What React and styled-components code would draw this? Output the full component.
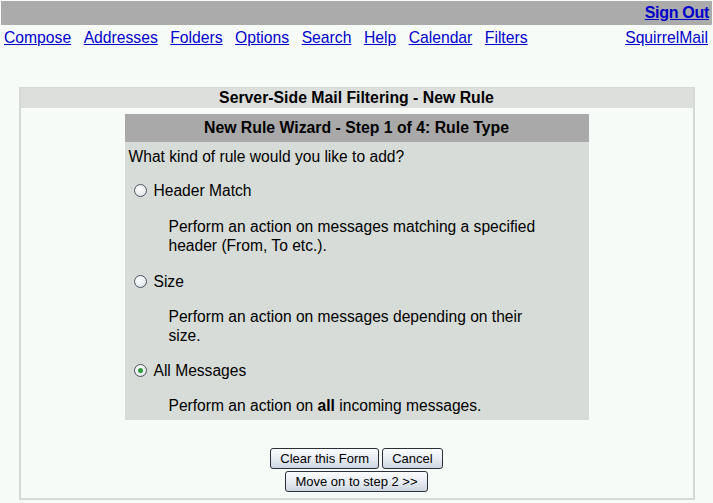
import React from "react";
import styled, { createGlobalStyle } from "styled-components";

const Global = createGlobalStyle`
  html, body {
    margin: 0;
    padding: 0;
    background: #f7fbf7;
    font-family: "Liberation Sans", Arial, sans-serif;
    font-size: 16px;
    color: #000;
  }
`;

const Page = styled.div`
  padding: 1px 1px 0;
  width: 711px;
`;

const TopBar = styled.div`
  height: 24px;
  background: #ababab;
  display: flex;
  justify-content: flex-end;
  align-items: center;
  padding-right: 3px;
`;

const Link = styled.a`
  color: #0000cc;
  text-decoration: underline;
  font-weight: ${(p) => (p.$bold ? 700 : 400)};
  letter-spacing: ${(p) => (p.$bold ? "-0.3px" : "0")};
  cursor: pointer;
`;

const NavRow = styled.div`
  display: flex;
  justify-content: space-between;
  padding: 3px 4px 0 3px;
  line-height: 19px;
  font-size: 15.7px;
`;

const NavLinks = styled.div`
  display: flex;
  gap: 12.5px;
`;

const Outer = styled.div`
  box-sizing: border-box;
  width: 676px;
  margin: 40px auto 0;
  border: 2px solid #d6dad6;
  border-top-width: 1px;
`;

const OuterHead = styled.div`
  background: #dcdfdc;
  height: 20px;
  line-height: 20px;
  text-align: center;
  font-weight: 700;
  font-size: 15.8px;
`;

const Wizard = styled.div`
  width: 464px;
  margin: 6px auto 0;
`;

const WizardHead = styled.div`
  background: #a9a9a9;
  height: 28px;
  line-height: 28px;
  text-align: center;
  font-weight: 700;
  font-size: 15.8px;
`;

const WizardBody = styled.div`
  background: #d8dcd8;
  padding: 5px 4px 5px;
  line-height: 19px;
  font-size: 15.6px;
`;

const Question = styled.div``;

const Option = styled.label`
  display: flex;
  align-items: center;
  gap: 7px;
  margin-top: ${(p) => p.$top}px;
  padding-left: 5px;
`;

const Radio = styled.span`
  box-sizing: border-box;
  width: 13px;
  height: 13px;
  border-radius: 50%;
  border: 1px solid #4d5560;
  background: radial-gradient(circle at 40% 35%, #ffffff 0%, #e8ecef 60%, #c9d0d6 100%);
  display: flex;
  align-items: center;
  justify-content: center;
  &::after {
    content: "";
    display: ${(p) => (p.$checked ? "block" : "none")};
    width: 5px;
    height: 5px;
    border-radius: 50%;
    background: #2e9a3c;
  }
`;

const Desc = styled.div`
  margin: ${(p) => p.$top}px 36px 0 40px;
`;

const Buttons = styled.div`
  display: flex;
  flex-direction: column;
  align-items: center;
  gap: 2px;
  margin-top: 28px;
  padding-bottom: 6px;
`;

const ButtonRow = styled.div`
  display: flex;
  gap: 3px;
`;

const Button = styled.button`
  font-family: "Liberation Sans", Arial, sans-serif;
  font-size: 13px;
  height: 21px;
  padding: 0 9px;
  border: 1px solid #2b2f38;
  border-radius: 3px;
  background: linear-gradient(#fbfcfe, #e6ebf2 55%, #cdd5e0);
  color: #000;
  line-height: 19px;
`;

const navItems = ["Compose", "Addresses", "Folders", "Options", "Search", "Help", "Calendar", "Filters"];

export default function App() {
  return (
    <Page>
      <Global />
      <TopBar>
        <Link $bold>Sign Out</Link>
      </TopBar>
      <NavRow>
        <NavLinks>
          {navItems.map((n) => (
            <Link key={n}>{n}</Link>
          ))}
        </NavLinks>
        <Link>SquirrelMail</Link>
      </NavRow>
      <Outer>
        <OuterHead>Server-Side Mail Filtering - New Rule</OuterHead>
        <Wizard>
          <WizardHead>New Rule Wizard - Step 1 of 4: Rule Type</WizardHead>
          <WizardBody>
            <Question>What kind of rule would you like to add?</Question>
            <Option $top={15}>
              <Radio />
              Header Match
            </Option>
            <Desc $top={17}>
              Perform an action on messages matching a specified header (From, To etc.).
            </Desc>
            <Option $top={17}>
              <Radio />
              Size
            </Option>
            <Desc $top={16}>Perform an action on messages depending on their size.</Desc>
            <Option $top={16}>
              <Radio $checked />
              All Messages
            </Option>
            <Desc $top={16}>
              Perform an action on <b>all</b> incoming messages.
            </Desc>
          </WizardBody>
        </Wizard>
        <Buttons>
          <ButtonRow>
            <Button>Clear this Form</Button>
            <Button>Cancel</Button>
          </ButtonRow>
          <Button>Move on to step 2 &gt;&gt;</Button>
        </Buttons>
      </Outer>
    </Page>
  );
}
